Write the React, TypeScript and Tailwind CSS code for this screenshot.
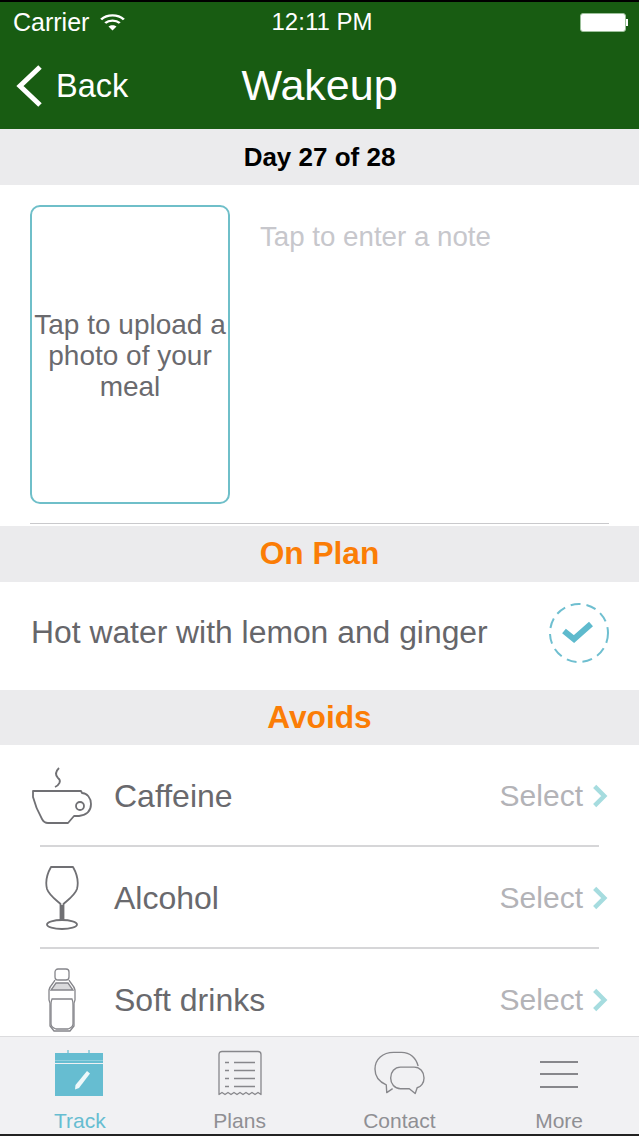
import React from 'react'

const FONT = { fontFamily: '"Liberation Sans", Arial, sans-serif' }

const Wifi = () => (
  <svg width="25" height="18" viewBox="0 0 22 18" fill="none" stroke="white" strokeWidth="2.4" preserveAspectRatio="none">
    <path d="M1 6.500C6.500 1 15.500 1 21 6.500" />
    <path d="M4.600 10C8 6.800 14 6.800 17.400 10" />
    <path d="M11 17.500L7.500 13.500C9.500 11.700 12.500 11.700 14.500 13.500Z" fill="white" stroke="none" />
  </svg>
)

const Cup = () => (
  <svg width="60" height="58" viewBox="0 0 60 58" fill="none" stroke="#707074" strokeWidth="1.800">
    <path d="M27 1C23 5 23 8 26 11C30 14 27 18 23 20" />
    <path d="M1 24H49L50 26C55 26 59 31 59 37C59 44 54 48 47 49H42L36 56H16C13 56 11 54 10 52C6 45 3 38 1 30Z" strokeLinejoin="round" />
    <circle cx="48" cy="39" r="4" />
  </svg>
)

const Glass = () => (
  <svg width="34" height="64" viewBox="0 0 34 64" fill="none" stroke="#707074" strokeWidth="1.800">
    <path d="M6 1H28C32 8 34 15 32 23C30 29 23 34 18.500 38V54H15.500V38C11 34 4 29 2 23C0 15 2 8 6 1Z" strokeLinejoin="round" />
    <path d="M17 39V54" strokeWidth="2" />
    <ellipse cx="17" cy="58.500" rx="15" ry="4.500" />
  </svg>
)

const Bottle = () => (
  <svg width="28" height="64" viewBox="0 0 28 64" fill="none" stroke="#85858a" strokeWidth="1.300">
    <rect x="7" y="1" width="14" height="11" rx="3" />
    <path d="M7 12C6 15 2 17 1 22V32L2 35V58L6 63H22L26 58V35L27 32V22C26 17 22 15 21 12" />
    <path d="M3 22H25L20 15H8Z" fill="#85858a" fillOpacity="0.3" />
    <path d="M4 31H24C25 33 25 35 25 37V56C25 58 23 60 20 61H8C5 60 3 58 3 56V37C3 35 3 33 4 31Z" />
  </svg>
)

const Calendar = () => (
  <svg width="48" height="46" viewBox="0 0 48 46" fill="none" className="mr-[2px]">
    <path d="M13 0V4M34 0V4" stroke="#66bdd1" strokeWidth="1.200" />
    <rect x="0" y="3" width="48" height="43" fill="#66bdd1" />
    <path d="M0 13.500H48" stroke="#eff0f2" strokeWidth="1" />
    <path d="M0 10.500H48" stroke="#8fd0df" strokeWidth="1" />
    <path d="M32 21L35 23.500L24 38L20 39.500L20.500 35Z" fill="#eef8fa" />
  </svg>
)

const Plans = () => (
  <svg width="44" height="47" viewBox="0 0 44 46" fill="none" stroke="#87878b" strokeWidth="1.300">
    <path d="M1 44V4C1 2 2 1 4 1H40C42 1 43 2 43 4V44L40 42L37 44L34 42L31 44L28 42L25 44L22 42L19 44L16 42L13 44L10 42L7 44L4 42Z" strokeLinejoin="round" />
    <path d="M7 12H11M16 12H37M7 20H11M16 20H37M7 28H11M16 28H37M7 36H11M16 36H37" strokeWidth="1.600" />
  </svg>
)

const Chat = () => (
  <svg width="51" height="44" viewBox="0 0 52 44" fill="none" stroke="#87878b" strokeWidth="1.400" className="ml-[1px]">
    <path d="M19 38L13 42L12.500 34C5 31 1 25 1 18C1 8 9 1 20 1H28C37 1 43 7 45 15" strokeLinejoin="round" />
    <path d="M27 16H41C47 16 51 21 51 27C51 32 48 36 44 37L42 43L36 38H27C21 38 17 33 17 27C17 21 21 16 27 16Z" strokeLinejoin="round" />
  </svg>
)

const Menu = () => (
  <svg width="38" height="28" viewBox="0 0 38 28" stroke="#87878b" strokeWidth="2" className="mt-[2px]">
    <path d="M0 2H38M0 14H38M0 27H38" />
  </svg>
)

const Chevron = () => (
  <svg width="16" height="24" viewBox="0 0 15 22" fill="none" stroke="#a6dcdf" strokeWidth="4.200">
    <path d="M2.500 2L11.500 11L2.500 20" />
  </svg>
)

const Check = () => (
  <svg width="62" height="62" viewBox="0 0 62 62" fill="none">
    <circle cx="31" cy="31" r="29" stroke="#6fbfd0" strokeWidth="2" strokeDasharray="10 6" />
    <path d="M16 29L26 37L43 22" stroke="#5ebacd" strokeWidth="6" />
  </svg>
)

const SectionHeader = ({ label, className }: { label: string; className: string }) => (
  <div className={`flex items-center justify-center bg-[#ebebed] ${className}`}>{label}</div>
)

const AVOIDS = [
  { label: 'Caffeine', icon: <Cup /> },
  { label: 'Alcohol', icon: <Glass /> },
  { label: 'Soft drinks', icon: <Bottle /> },
]

const TABS = [
  { label: 'Track', icon: <Calendar />, active: true },
  { label: 'Plans', icon: <Plans />, active: false },
  { label: 'Contact', icon: <Chat />, active: false },
  { label: 'More', icon: <Menu />, active: false },
]

export default function App() {
  return (
    <div className="flex h-[1136px] w-[639px] flex-col overflow-hidden bg-white" style={FONT}>
      <header className="h-[129px] shrink-0 border-t-2 border-black bg-[#185c12] text-white">
        <div className="flex h-[40px] items-center justify-between pl-[13px] pr-[11px]">
          <div className="flex w-[200px] items-center gap-[11px] text-[25px] leading-none">
            Carrier <Wifi />
          </div>
          <span className="ml-[3px] text-[24px] leading-none">12:11 PM</span>
          <div className="flex w-[200px] items-center justify-end">
            <div className="h-[19px] w-[46px] rounded-[3px] border border-[#9cc09a] bg-white" />
            <div className="h-[7px] w-[2px] bg-white" />
          </div>
        </div>
        <div className="relative flex h-[87px] items-center justify-center">
          <div className="absolute left-[16px] top-[23px] flex items-center gap-[13px]">
            <svg width="27" height="42" viewBox="0 0 27 42" fill="none" stroke="white" strokeWidth="5">
              <path d="M24 2L4 21L24 40" />
            </svg>
            <span className="text-[32.500px] leading-none">Back</span>
          </div>
          <span className="text-[43px] leading-none">Wakeup</span>
        </div>
      </header>

      <SectionHeader label="Day 27 of 28" className="h-[56px] shrink-0 text-[26px] font-bold text-black" />

      <section className="mx-[30px] flex h-[339px] shrink-0 gap-[30px] border-b border-[#c9c9cc] pt-[20px]">
        <div className="flex h-[299px] w-[200px] shrink-0 items-center justify-center rounded-[10px] border-2 border-[#6fbfc9] pt-[2px] text-center text-[28px] leading-[31px] text-[#6a6a6e]">
          <span>
            Tap to upload a
            <br />
            photo of your
            <br />
            meal
          </span>
        </div>
        <p className="pt-[16px] text-[27.700px] leading-[32px] text-[#c7c7cc]">Tap to enter a note</p>
      </section>

      <SectionHeader label="On Plan" className="mt-[2px] h-[56px] shrink-0 text-[31.700px] font-bold text-[#fb7d06]" />

      <div className="flex h-[108px] shrink-0 items-center justify-between pb-[6px] pl-[31px] pr-[29px]">
        <span className="text-[31.850px] leading-none text-[#66666a]">Hot water with lemon and ginger</span>
        <Check />
      </div>

      <SectionHeader label="Avoids" className="h-[55px] shrink-0 text-[31.700px] font-bold text-[#fb7d06]" />

      <div className="min-h-0 flex-1 overflow-hidden">
        {AVOIDS.map((item, i) => (
          <div key={item.label} className="relative mx-[30px] h-[102px] shrink-0">
            <div className="flex h-full items-center">
              <div className="flex w-[84px] shrink-0 items-center pl-[2px]">
                <div className="flex w-[60px] justify-center">{item.icon}</div>
              </div>
              <span className="flex-1 text-[32px] leading-none text-[#69696d]">{item.label}</span>
              <span className="mr-[9px] text-[30px] leading-none text-[#b3b3b7]">Select</span>
              <div className="mr-[1px] flex">
                <Chevron />
              </div>
            </div>
            {i < AVOIDS.length - 1 && <div className="absolute bottom-0 left-[10px] right-[10px] h-[2px] bg-[#d6d6d8]" />}
          </div>
        ))}
      </div>

      <nav className="grid h-[100px] shrink-0 grid-cols-4 border-t border-b-2 border-[#dcdcde] border-b-[#222] bg-[#f1f1f3]">
        {TABS.map((tab) => (
          <div key={tab.label} className="flex flex-col items-center">
            <div className="flex h-[72px] items-center justify-center">{tab.icon}</div>
            <span className={`text-[21px] leading-[24px] ${tab.active ? 'text-[#66bdd1]' : 'text-[#8f8f93]'}`}>{tab.label}</span>
          </div>
        ))}
      </nav>
    </div>
  )
}
